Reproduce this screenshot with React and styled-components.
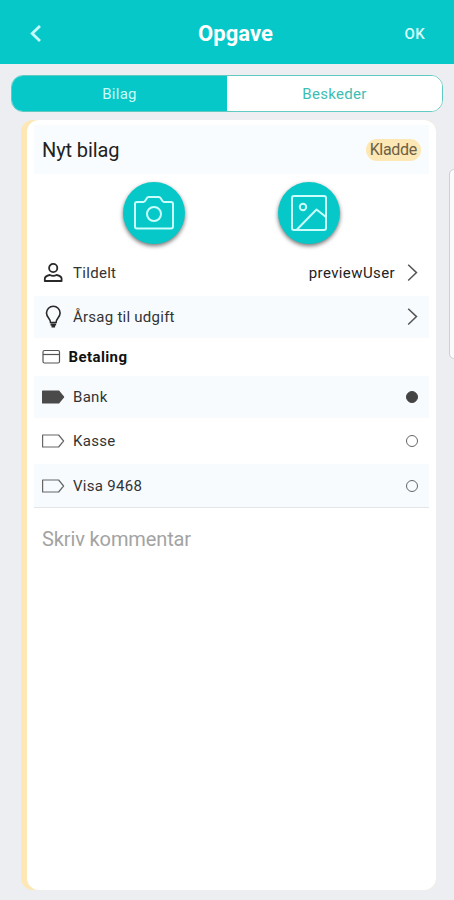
import React, { useState } from 'react'
import styled, { createGlobalStyle } from 'styled-components'

const GlobalStyle = createGlobalStyle`
  * {
    box-sizing: border-box;
  }

  body {
    margin: 0;
    background: #edeef2;
    font-family: Roboto, 'Liberation Sans', sans-serif;
    color: #222;
  }

  button {
    border: 0;
    padding: 0;
    background: none;
    font: inherit;
    color: inherit;
    cursor: pointer;
  }
`

const Screen = styled.div`
  position: relative;
  display: flex;
  flex-direction: column;
  width: 454px;
  height: 900px;
  overflow: hidden;
`

const Header = styled.header`
  display: grid;
  grid-template-columns: 80px 1fr 80px;
  align-items: center;
  height: 64px;
  padding-top: 4px;
  background: #07c8c8;
  color: #fff;
`

const Title = styled.h1`
  margin: 0;
  padding-left: 17px;
  font-size: 22px;
  line-height: 26px;
  font-weight: 700;
  letter-spacing: 0.1px;
  text-align: center;
`

const BackButton = styled.button`
  display: flex;
  padding-left: 28px;
  color: #c5fbfa;
`

const OkButton = styled.button`
  justify-self: end;
  margin-right: 29px;
  font-size: 15px;
  font-weight: 500;
  letter-spacing: 0.3px;
  color: #d9fffd;
`

const Tabs = styled.div`
  display: flex;
  flex: none;
  height: 37px;
  margin: 11px 11px 0;
  border: 1px solid #62cbc1;
  border-radius: 12px;
  background: #fff;
  overflow: hidden;
`

const Tab = styled.button`
  flex: 1;
  font-size: 15px;
  letter-spacing: 0.3px;
  background: ${props => (props.$active ? '#07c8c8' : '#fff')};
  color: ${props => (props.$active ? '#c9fcf8' : '#3dbdb4')};
`

const Card = styled.main`
  flex: none;
  height: 770px;
  margin: 8px 18px 0 21px;
  padding-left: 6px;
  border-radius: 12px;
  background: #fde7b4;
`

const CardBody = styled.div`
  height: 100%;
  padding: 5px 7px 0;
  border-radius: 12px;
  background: #fff;
`

const CardHeader = styled.div`
  display: flex;
  align-items: center;
  justify-content: space-between;
  height: 49px;
  padding: 0 8px;
  background: #f9fcfe;
`

const CardTitle = styled.h2`
  margin: 0;
  font-size: 20px;
  font-weight: 400;
  letter-spacing: -0.1px;
`

const Badge = styled.span`
  height: 22px;
  padding: 0 4px;
  border-radius: 11px;
  background: #fde7b4;
  font-size: 16px;
  letter-spacing: -0.3px;
  line-height: 22px;
  color: #6b6045;
`

const Actions = styled.div`
  display: flex;
  justify-content: center;
  gap: 93px;
  height: 75px;
  padding-top: 8px;
`

const RoundButton = styled.button`
  display: flex;
  align-items: center;
  justify-content: center;
  width: 62px;
  height: 62px;
  border-radius: 50%;
  background: #07c8c8;
  color: #c9fffc;
  box-shadow: 0 2px 4px rgba(0, 0, 0, 0.55);
`

const Row = styled.div`
  display: flex;
  align-items: center;
  height: ${props => props.$height || 44}px;
  padding: 0 11px 0 8px;
  background: ${props => (props.$shaded ? '#f7fbfe' : '#fff')};
`

const IconSlot = styled.span`
  display: flex;
  width: ${props => props.$width || 31}px;
`

const Label = styled.span`
  flex: 1;
  font-size: 15px;
  letter-spacing: ${props => props.$spacing || 0}px;
  font-weight: ${props => (props.$bold ? 700 : 400)};
  color: ${props => (props.$bold ? '#111' : '#333')};
`

const Value = styled.span`
  margin-right: 12px;
  font-size: 15px;
  letter-spacing: 0.4px;
`

const Radio = styled.span`
  width: 12px;
  height: 12px;
  border: 1.5px solid #777;
  border-radius: 50%;
  background: ${props => (props.$checked ? '#444' : 'transparent')};
  border-color: ${props => (props.$checked ? '#444' : '#666')};
`

const Comment = styled.input`
  width: 100%;
  height: 63px;
  padding: 0 8px;
  border: 0;
  border-top: 1px solid #e2e6e9;
  outline: none;
  background: transparent;
  font: 20px Roboto, 'Liberation Sans', sans-serif;
  letter-spacing: -0.12px;

  &::placeholder {
    color: #a3a3a3;
    opacity: 1;
  }
`

const SidePanel = styled.div`
  position: absolute;
  top: 169px;
  right: -10px;
  width: 15px;
  height: 190px;
  border: 1px solid #cfd0d4;
  border-radius: 5px;
  background: #fbfbfd;
`

const BackIcon = () => (
  <svg width="14" height="18" viewBox="0 0 14 18" fill="none" stroke="currentColor" strokeWidth="2.8">
    <path d="M12 1 4.200 8.500l7.800 7.500" />
  </svg>
)

const CameraIcon = () => (
  <svg width="42" height="36" viewBox="0 0 42 36" fill="none" stroke="currentColor" strokeWidth="2">
    <path d="M4 7h6.500c2.500 0 2.500-5 5-5h10.500c2.500 0 2.500 5 5 5H38a2 2 0 0 1 2 2v22.500a2 2 0 0 1-2 2H4a2 2 0 0 1-2-2V9a2 2 0 0 1 2-2Z" />
    <circle cx="21" cy="19" r="7" />
  </svg>
)

const PictureIcon = () => (
  <svg width="38" height="38" viewBox="0 0 38 38" fill="none" stroke="currentColor" strokeWidth="2">
    <rect x="2" y="2" width="34" height="34" rx="2" />
    <circle cx="13" cy="13" r="3.200" />
    <path d="M7 35.500 26.500 15.500l9.500 7.500" strokeLinejoin="round" />
  </svg>
)

const PersonIcon = () => (
  <svg width="22" height="22" viewBox="0 0 22 22" fill="none" stroke="#292929" strokeWidth="1.8">
    <circle cx="11.200" cy="6" r="4.100" />
    <path d="M2.800 19v-2.200c0-2 2-3.200 5-3.800 2 1 4.800 1 6.800 0 3 .6 5 1.800 5 3.800V19Z" strokeLinejoin="round" />
  </svg>
)

const BulbIcon = () => (
  <svg width="22" height="24" viewBox="0 0 22 24" fill="none" stroke="#292929" strokeWidth="1.6">
    <path d="M8.500 17.500c0-4-4-5-4-9.500a6.800 6.800 0 0 1 13.600 0c0 4.500-4 5.500-4 9.500Z" />
    <path d="M8.500 19.500h5.600M9.500 21.500h3.600" strokeWidth="2" />
  </svg>
)

const CardIcon = () => (
  <svg width="19" height="16" viewBox="0 0 19 16" fill="none" stroke="#555" strokeWidth="1.2">
    <rect x="1" y="1.500" width="16.500" height="12.500" rx="1.500" />
    <path d="M1 5.500h16.500" />
  </svg>
)

const TagIcon = ({ filled }) => (
  <svg width="23" height="14" viewBox="0 0 23 14" fill={filled ? '#4a4a4a' : 'none'} stroke={filled ? '#4a4a4a' : '#666'} strokeWidth="1.2">
    <path d="M.6 1h16l5 6-5 6H.6Z" strokeLinejoin="round" />
  </svg>
)

const ChevronIcon = () => (
  <svg width="11" height="18" viewBox="0 0 11 18" fill="none" stroke="#555" strokeWidth="1.5">
    <path d="m1.200.7 8.300 7.900-8.300 7.900" />
  </svg>
)

const accounts = [
  { name: 'Bank', height: 42 },
  { name: 'Kasse', height: 46 },
  { name: 'Visa 9468', height: 43 }
]

function App() {
  const [tab, setTab] = useState('Bilag')
  const [account, setAccount] = useState('Bank')

  return (
    <Screen>
      <GlobalStyle />
      <Header>
        <BackButton aria-label="Tilbage">
          <BackIcon />
        </BackButton>
        <Title>Opgave</Title>
        <OkButton>OK</OkButton>
      </Header>
      <Tabs>
        {['Bilag', 'Beskeder'].map(name => (
          <Tab key={name} $active={tab === name} onClick={() => setTab(name)}>
            {name}
          </Tab>
        ))}
      </Tabs>
      <Card>
        <CardBody>
          <CardHeader>
            <CardTitle>Nyt bilag</CardTitle>
            <Badge>Kladde</Badge>
          </CardHeader>
          <Actions>
            <RoundButton aria-label="Kamera">
              <CameraIcon />
            </RoundButton>
            <RoundButton aria-label="Billede">
              <PictureIcon />
            </RoundButton>
          </Actions>
          <Row $height={47}>
            <IconSlot>
              <PersonIcon />
            </IconSlot>
            <Label $spacing={0.3}>Tildelt</Label>
            <Value>previewUser</Value>
            <ChevronIcon />
          </Row>
          <Row $height={42} $shaded>
            <IconSlot>
              <BulbIcon />
            </IconSlot>
            <Label $spacing={0.25}>Årsag til udgift</Label>
            <ChevronIcon />
          </Row>
          <Row $height={38}>
            <IconSlot $width={26.5}>
              <CardIcon />
            </IconSlot>
            <Label $bold $spacing={0.4}>Betaling</Label>
          </Row>
          {accounts.map(({ name, height }, i) => (
            <Row key={name} $height={height} $shaded={i % 2 === 0} onClick={() => setAccount(name)}>
              <IconSlot>
                <TagIcon filled={account === name} />
              </IconSlot>
              <Label $spacing={0.3}>{name}</Label>
              <Radio $checked={account === name} />
            </Row>
          ))}
          <Comment placeholder="Skriv kommentar" />
        </CardBody>
      </Card>
      <SidePanel />
    </Screen>
  )
}

export default App
